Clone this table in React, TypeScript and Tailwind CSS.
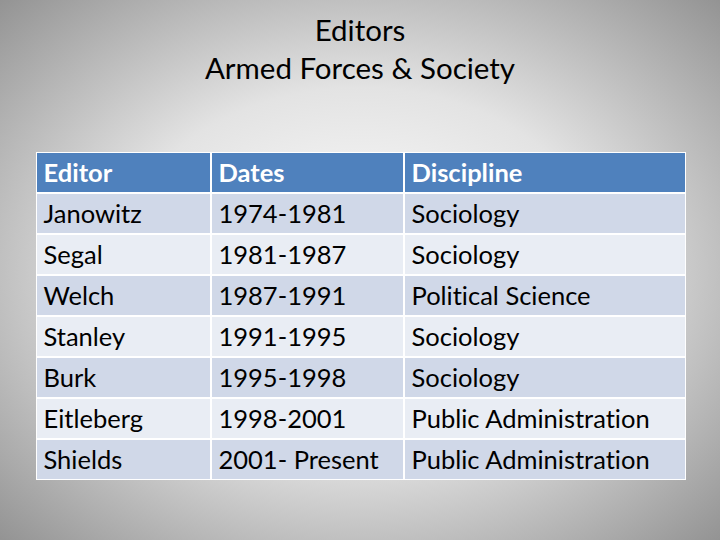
const rows = [
  ["Janowitz", "1974-1981", "Sociology"],
  ["Segal", "1981-1987", "Sociology"],
  ["Welch", "1987-1991", "Political Science"],
  ["Stanley", "1991-1995", "Sociology"],
  ["Burk", "1995-1998", "Sociology"],
  ["Eitleberg", "1998-2001", "Public Administration"],
  ["Shields", "2001- Present", "Public Administration"],
];

export default function App() {
  return (
    <div
      className="w-[720px] h-[540px] flex flex-col items-center bg-[radial-gradient(ellipse_75%_75%_at_50%_50%,#ffffff_0%,#e3e3e3_45%,#8a8a8a_100%)] text-black [font-variant-ligatures:none]"
      style={{ fontFamily: "Lato, 'Liberation Sans', sans-serif" }}
    >
      <div className="pt-[11px] text-center text-[29.5px] leading-[38px]">
        <div>Editors</div>
        <div>Armed Forces &amp; Society</div>
      </div>
      <div className="mt-[65px] w-[650px] bg-white p-[1px] ml-[1px]">
        <div className="grid grid-cols-[173px_191px_1fr] gap-[2px] text-[25.5px] leading-[39px]">
          <div className="bg-[#4f81bd] text-white font-bold pl-[7px]">Editor</div>
          <div className="bg-[#4f81bd] text-white font-bold pl-[7px]">Dates</div>
          <div className="bg-[#4f81bd] text-white font-bold pl-[7px]">Discipline</div>
          {rows.map((r, i) =>
            r.map((c, j) => (
              <div
                key={`${i}-${j}`}
                className={`pl-[7px] ${i % 2 === 0 ? "bg-[#d0d8e8]" : "bg-[#e9edf4]"}`}
              >
                {c}
              </div>
            ))
          )}
        </div>
      </div>
    </div>
  );
}
